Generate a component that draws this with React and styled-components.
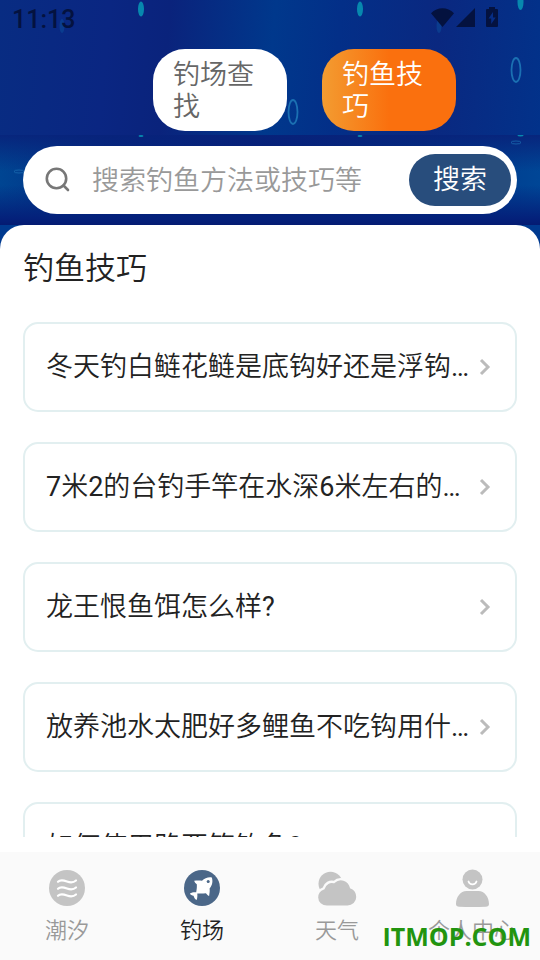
import React, { useState } from 'react';
import styled, { createGlobalStyle } from 'styled-components';

const GlobalStyle = createGlobalStyle`
  * {
    box-sizing: border-box;
  }
  body {
    margin: 0;
    background: #fff;
    font-family: Roboto, "Noto Sans CJK SC DemiLight", "Noto Sans CJK SC", sans-serif;
    color: #222;
  }
  button, input {
    font-family: inherit;
  }
`;

const Page = styled.div`
  position: relative;
  height: 100vh;
  display: flex;
  flex-direction: column;
  overflow: hidden;
`;

const Hero = styled.header`
  position: relative;
  height: 135px;
  flex-shrink: 0;
  background: linear-gradient(95deg, #082c82 0%, #0a2682 20%, #0a237c 31%, #00388c 50%, #032f88 62%, #0a2880 80%, #02328a 100%);
`;

const SearchArea = styled.div`
  position: relative;
  flex-shrink: 0;
  padding: 11px 23px 35px;
  background:
    linear-gradient(180deg, rgba(8, 34, 122, 0.9) 0, rgba(0, 64, 146, 0) 36px, rgba(0, 56, 140, 0) 50px, #04207a 84px, #041b72 90px, #003a90 90px),
    linear-gradient(90deg, #004592 0%, #032a82 20%, #021f78 50%, #003488 80%, #004696 100%);
`;

const Bubbles = styled.svg`
  position: absolute;
  top: 0;
  left: 0;
  width: 100%;
  height: 100%;
  fill: none;
`;

const StatusBar = styled.div`
  position: relative;
  display: flex;
  justify-content: space-between;
  align-items: center;
  height: 38px;
  padding: 0 40px 0 12px;
  color: #04123f;
  font-size: 25px;
  font-weight: 500;
`;

const StatusIcons = styled.svg`
  width: 70px;
  height: 22px;
  margin-bottom: 2px;
  fill: #04123f;
`;

const Tabs = styled.div`
  position: relative;
  display: flex;
  justify-content: center;
  gap: 35px;
  padding: 11px 0 0 69px;
`;

const Tab = styled.button`
  width: 134px;
  height: 82px;
  padding: 2px 20px 0;
  border: 0;
  border-radius: 32px;
  text-align: left;
  font-size: 27px;
  line-height: 32px;
  color: ${props => props.$active ? '#fff' : '#666'};
  background: ${props => props.$active ? 'linear-gradient(90deg, #f39c31 0%, #fa700e 50%)' : '#fff'};
`;

const SearchBar = styled.form`
  position: relative;
  display: flex;
  align-items: center;
  height: 68px;
  padding: 0 6px 0 22px;
  border-radius: 34px;
  background: #fff;
`;

const SearchIcon = styled.svg`
  width: 26px;
  height: 26px;
  flex-shrink: 0;
  fill: none;
  stroke: #777;
`;

const SearchInput = styled.input`
  flex: 1;
  min-width: 0;
  height: 52px;
  padding: 2px 0 0;
  margin-left: 21px;
  border: 0;
  outline: 0;
  background: none;
  font-size: 27px;
  color: #222;
  &::placeholder {
    color: #999;
    opacity: 1;
  }
`;

const SearchButton = styled.button`
  width: 102px;
  height: 52px;
  padding: 0 0 6px;
  border: 0;
  border-radius: 26px;
  background: #284d7c;
  color: #fff;
  font-size: 27px;
`;

const Panel = styled.main`
  position: relative;
  flex: 1;
  min-height: 0;
  display: flex;
  flex-direction: column;
  margin-top: -24px;
  padding: 0 23px;
  border-radius: 24px 24px 0 0;
  background: #fff;
`;

const Title = styled.h1`
  margin: 0;
  padding: 22px 0 31px;
  font-size: 31px;
  line-height: 44px;
  font-weight: 400;
`;

const List = styled.div`
  flex: 1;
  min-height: 0;
  display: flex;
  flex-direction: column;
  gap: 30px;
  margin-bottom: 15px;
  overflow: hidden;
`;

const Card = styled.a`
  display: flex;
  align-items: center;
  height: 90px;
  flex-shrink: 0;
  padding: 0 24px 0 21px;
  border: 2px solid #e2eff0;
  border-radius: 15px;
  color: inherit;
  text-decoration: none;
`;

const CardText = styled.span`
  flex: 1;
  min-width: 0;
  overflow: hidden;
  white-space: nowrap;
  text-overflow: ellipsis;
  font-size: 27px;
  line-height: 40px;
`;

const Chevron = styled.svg`
  width: 12px;
  height: 18px;
  margin-left: 9px;
  flex-shrink: 0;
  fill: none;
  stroke: #bbb;
`;

const NavBar = styled.nav`
  display: grid;
  grid-template-columns: repeat(4, 1fr);
  height: 108px;
  flex-shrink: 0;
  background: #fafafa;
`;

const NavItem = styled.a`
  display: flex;
  flex-direction: column;
  align-items: center;
  padding: 16px 1px 0 0;
  font-size: 22px;
  line-height: 32px;
  color: ${props => props.$active ? '#222' : '#999'};
  text-decoration: none;
`;

const NavIcon = styled.svg`
  width: 40px;
  height: 40px;
  margin-bottom: 7px;
`;

const Watermark = styled.div`
  position: absolute;
  right: 9px;
  bottom: 6px;
  font-family: "Open Sans", sans-serif;
  font-size: 25px;
  line-height: 36px;
  font-weight: 700;
  color: #22940f;
`;

const tabs = ['钓场查找', '钓鱼技巧'];

const articles = [
  '冬天钓白鲢花鲢是底钩好还是浮钩好',
  '7米2的台钓手竿在水深6米左右的水域怎么钓',
  '龙王恨鱼饵怎么样?',
  '放养池水太肥好多鲤鱼不吃钩用什么饵料',
  '如何使用路亚竿钓鱼?',
];

const TideIcon = () => (
  <NavIcon viewBox="0 0 40 40" fill="none">
    <circle cx="20" cy="20" r="18" fill="#c4c4c4" />
    <g stroke="#fff" strokeWidth="2.2" strokeLinecap="round">
      <path d="M11 13.800c2.500-2.600 5.500-1.600 9-.3s6.500 1.200 9-1" />
      <path d="M11 20.800c2.500-2.600 5.500-1.600 9-.3s6.500 1.200 9-1" />
      <path d="M11 27.800c2.500-2.600 5.500-1.600 9-.3s6.500 1.200 9-1" />
    </g>
  </NavIcon>
);

const FishIcon = () => (
  <NavIcon viewBox="0 0 40 40">
    <circle cx="20" cy="20" r="18" fill="#4b6788" />
    <path
      d="M12.200 12.800c3-.6 5.500-.4 7.800 0 2.600-2.700 6-3.900 9.800-3.400 1.200 3.400.8 7.600-2.200 11 .4 2.800-.2 5.300-.5 7.500-1.600-.4-2.200-1.500-3.200-2.600-2.600.2-5.200.4-8.600.1.200 2.400.1 4.300-.6 6.600-2.200-.6-2.400-2.600-3.200-4.200-1.500-.3-3-.7-3.600-2.200 2-1.300 4.200-1.600 6.300-1.300.6-3 .8-5.600.6-8-1.200-.8-2.300-1.900-2.600-3.500z"
      fill="#fff"
    />
    <circle cx="26.200" cy="13.500" r="1.500" fill="#4b6788" />
  </NavIcon>
);

const WeatherIcon = () => (
  <NavIcon viewBox="0 0 40 40" fill="#c4c4c4">
    <circle cx="13.500" cy="15.800" r="12" />
    <path
      d="M10 38.800C4.500 38.800 0 34.500 0 29.500C0 25 2.800 21.600 6.600 20.300C8.200 15.400 12.600 12.800 17 14C22.500 8.600 32 11.200 34 19.300C37.800 20.800 40.400 24.600 40.400 29C40.400 34.500 36 38.800 30.500 38.800z"
      stroke="#fafafa"
      strokeWidth="2.400"
    />
  </NavIcon>
);

const UserIcon = () => (
  <NavIcon viewBox="0 0 40 40" fill="#c4c4c4">
    <circle cx="20.500" cy="11.500" r="10" />
    <path d="M16.500 13.500a4.200 4 0 0 0 8 0" fill="none" stroke="#fff" strokeWidth="1.800" strokeLinecap="round" />
    <path d="M14.500 23h12c6 0 10.500 6 10.500 13 0 1.800-1.200 2.700-3.200 2.700-8.800.5-17.800.5-26.600 0-2 0-3.200-.9-3.200-2.700 0-7 4.500-13 10.500-13z" />
  </NavIcon>
);

const navItems = [
  { label: '潮汐', Icon: TideIcon },
  { label: '钓场', Icon: FishIcon, active: true },
  { label: '天气', Icon: WeatherIcon },
  { label: '个人中心', Icon: UserIcon },
];

const App = () => {
  const [tab, setTab] = useState(1);

  return (
    <Page>
      <GlobalStyle />
      <Hero>
        <Bubbles viewBox="0 0 540 135" preserveAspectRatio="none" aria-hidden="true">
          <g fill="#0788ae">
            <ellipse cx="141" cy="9" rx="3" ry="7.500" />
            <ellipse cx="360" cy="9" rx="3" ry="7.500" />
            <ellipse cx="520.500" cy="2" rx="3" ry="8" />
          </g>
          <g fill="#0b4f9c" opacity="0.5">
            <ellipse cx="62" cy="26" rx="2.500" ry="7" />
            <ellipse cx="439" cy="26" rx="2.500" ry="7" />
          </g>
          <g stroke="#1b70b2" strokeWidth="1.800">
            <ellipse cx="293" cy="112" rx="4.500" ry="12" />
            <ellipse cx="516" cy="70" rx="4.500" ry="12" />
          </g>
        </Bubbles>
        <StatusBar>
          <span>11:13</span>
          <StatusIcons viewBox="0 0 70 22" aria-hidden="true">
            <path d="M1 6.200C7.500-.4 17.500-.4 24 6.200L12.500 20z" />
            <path d="M45 1v19H26z" />
            <path
              fillRule="evenodd"
              d="M59 0h6v2h2q1 0 1 1v16q0 1-1 1H57q-1 0-1-1V3q0-1 1-1h2zM63 5l-4.500 6.500h2.700V17l4.500-6.500h-2.700z"
            />
          </StatusIcons>
        </StatusBar>
        <Tabs>
          {tabs.map((label, i) => (
            <Tab key={label} type="button" $active={i === tab} onClick={() => setTab(i)}>{label}</Tab>
          ))}
        </Tabs>
      </Hero>
      <SearchArea>
        <Bubbles viewBox="0 0 540 114" preserveAspectRatio="none" aria-hidden="true">
          <g fill="#0788ae">
            <ellipse cx="141" cy="1" rx="2.500" ry="1" />
            <ellipse cx="360" cy="1" rx="2.500" ry="1" />
            <ellipse cx="520.500" cy="0.500" rx="3" ry="1" />
          </g>
          <g stroke="#1b6bb0" strokeWidth="0.800">
            <ellipse cx="516" cy="7.500" rx="5" ry="1.500" />
            <ellipse cx="19" cy="36.500" rx="5" ry="1.500" />
          </g>
        </Bubbles>
        <SearchBar onSubmit={e => e.preventDefault()}>
          <SearchIcon viewBox="0 0 26 26" strokeWidth="2.600" strokeLinecap="round" aria-hidden="true">
            <circle cx="11.500" cy="11.500" r="9.700" />
            <path d="M18.500 18.500l4.500 4.500" />
          </SearchIcon>
          <SearchInput type="text" aria-label="搜索" placeholder="搜索钓鱼方法或技巧等" />
          <SearchButton type="submit">搜索</SearchButton>
        </SearchBar>
      </SearchArea>
      <Panel>
        <Title>钓鱼技巧</Title>
        <List>
          {articles.map(text => (
            <Card key={text} href="#">
              <CardText>{text}</CardText>
              <Chevron viewBox="0 0 12 18" strokeWidth="3" aria-hidden="true">
                <path d="M2 2l7 7-7 7" />
              </Chevron>
            </Card>
          ))}
        </List>
      </Panel>
      <NavBar>
        {navItems.map(({ label, Icon, active }) => (
          <NavItem key={label} href="#" $active={active}>
            <Icon />
            {label}
          </NavItem>
        ))}
      </NavBar>
      <Watermark>ITMOP.COM</Watermark>
    </Page>
  );
};

export default App;
